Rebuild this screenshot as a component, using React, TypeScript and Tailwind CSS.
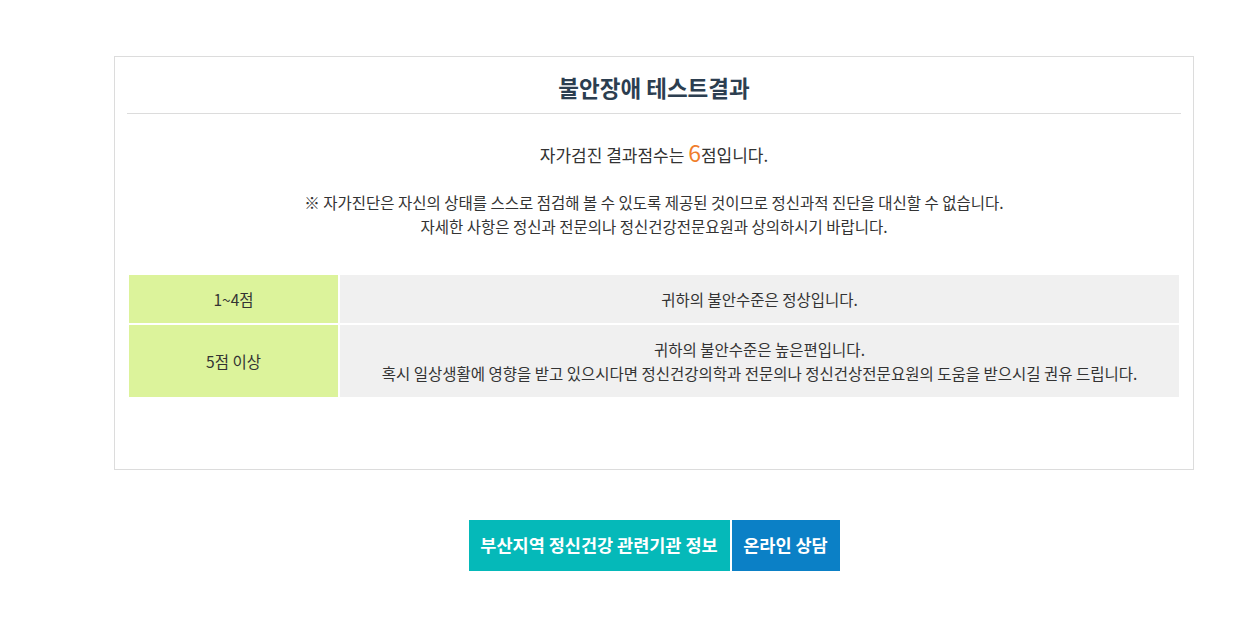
export default function App() {
  const font = { fontFamily: '"Noto Sans CJK KR", "Noto Sans", sans-serif' };
  return (
    <div className="w-[1242px] h-[625px] bg-white text-[#333]" style={font}>
      <div className="pt-[56px] pl-[114px]">
        <div className="w-[1080px] border border-[#dcdcdc] px-[12px] pb-[70px]">
          <div className="border-b border-[#dcdcdc] pt-[16px] pb-[12px] text-center text-[22.5px] leading-[28px] font-bold text-[#2c3e50]">
            불안장애 테스트결과
          </div>
          <div className="mt-[24px] text-center text-[17px] leading-[28px]">
            자가검진 결과점수는 <span className="text-[23px] text-[#f07d2a]">6</span>점입니다.
          </div>
          <div className="mt-[21px] text-center text-[15.5px] leading-[24px]">
            <p>※ 자가진단은 자신의 상태를 스스로 점검해 볼 수 있도록 제공된 것이므로 정신과적 진단을 대신할 수 없습니다.</p>
            <p>자세한 사항은 정신과 전문의나 정신건강전문요원과 상의하시기 바랍니다.</p>
          </div>
          <div className="mt-[35px] grid grid-cols-[209px_1fr] gap-[2px] p-[2px] text-[15.5px] leading-[24px] text-center">
            <div className="h-[48px] bg-[#dcf39b] flex items-center justify-center">1~4점</div>
            <div className="h-[48px] bg-[#f0f0f0] flex items-center justify-center">귀하의 불안수준은 정상입니다.</div>
            <div className="h-[72px] bg-[#dcf39b] flex items-center justify-center">5점 이상</div>
            <div className="h-[72px] bg-[#f0f0f0] flex flex-col items-center justify-center">
              <p>귀하의 불안수준은 높은편입니다.</p>
              <p>혹시 일상생활에 영향을 받고 있으시다면 정신건강의학과 전문의나 정신건상전문요원의 도움을 받으시길 권유 드립니다.</p>
            </div>
          </div>
        </div>
        <div className="w-[1080px] mt-[50px] flex justify-center gap-[2px]">
          <button className="h-[51px] w-[261px] bg-[#05b9b9] text-white text-[17.5px] font-bold">부산지역 정신건강 관련기관 정보</button>
          <button className="h-[51px] w-[108px] bg-[#0b80c6] text-white text-[17.5px] font-bold">온라인 상담</button>
        </div>
      </div>
    </div>
  );
}
